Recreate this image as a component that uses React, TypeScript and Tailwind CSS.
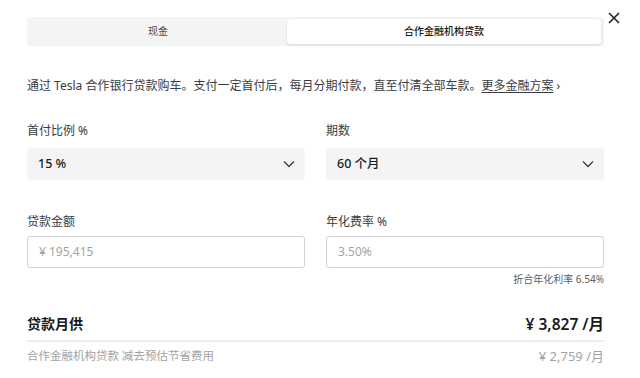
const ChevronDown = () => (
  <svg width="12" height="8" viewBox="0 0 12 8" fill="none" stroke="#393c41" strokeWidth="1.3">
    <path d="M1 1.5l5 5 5-5" />
  </svg>
);

const App = () => {
  return (
    <div
      className="relative w-[640px] h-[378px] overflow-hidden bg-white text-[#393c41]"
      style={{ fontFamily: '"Noto Sans", "Noto Sans CJK SC", sans-serif' }}
    >
      {/* Close */}
      <button className="absolute left-[608px] top-[12px] w-[12px] h-[12px]">
        <svg width="12" height="12" viewBox="0 0 12 12" stroke="#222" strokeWidth="1.6" fill="none">
          <path d="M1 1l10 10M11 1L1 11" />
        </svg>
      </button>

      <div className="pl-[27px] pr-[36px] pt-[17px]">
        {/* Tabs */}
        <div className="flex h-[29px] rounded-[3px] bg-[#f4f4f4] p-[2px] pr-[3px]">
          <div className="w-[258px] flex items-center justify-center text-[10px] text-[#4a4c50]">现金</div>
          <div className="flex-1 flex items-center justify-center rounded-[3px] bg-white text-[10px] font-medium text-[#171a20] shadow-[0_1px_3px_rgba(0,0,0,0.12)]">
            合作金融机构贷款
          </div>
        </div>

        {/* Description */}
        <p className="mt-[31px] text-[12px] leading-[18px] text-[#393c41]">
          通过 Tesla 合作银行贷款购车。支付一定首付后，每月分期付款，直至付清全部车款。
          <a href="#" className="underline underline-offset-2 decoration-[#393c41]">更多金融方案</a> ›
        </p>

        {/* Selects */}
        <div className="mt-[27px] grid grid-cols-2 gap-x-[21px]">
          <div>
            <div className="text-[12px] leading-[18px]">首付比例 %</div>
            <div className="mt-[8px] h-[32px] flex items-center justify-between rounded-[3px] bg-[#f4f4f4] pl-[11px] pr-[10px] text-[12.5px] font-medium text-[#171a20]">
              <span>15 %</span>
              <ChevronDown />
            </div>
          </div>
          <div>
            <div className="text-[12px] leading-[18px]">期数</div>
            <div className="mt-[8px] h-[32px] flex items-center justify-between rounded-[3px] bg-[#f4f4f4] pl-[11px] pr-[10px] text-[12.5px] font-medium text-[#171a20]">
              <span>60 个月</span>
              <ChevronDown />
            </div>
          </div>
        </div>

        {/* Inputs */}
        <div className="mt-[33px] grid grid-cols-2 gap-x-[21px]">
          <div>
            <div className="text-[12px] leading-[18px]">贷款金额</div>
            <div className="mt-[5px] h-[32px] flex items-center rounded-[3px] border border-[#d0d1d2] pl-[11px] text-[12px] text-[#a2a3a5]">
              ¥ 195,415
            </div>
          </div>
          <div>
            <div className="text-[12px] leading-[18px]">年化费率 %</div>
            <div className="mt-[5px] h-[32px] flex items-center rounded-[3px] border border-[#d0d1d2] pl-[11px] text-[12px] text-[#a2a3a5]">
              3.50%
            </div>
          </div>
        </div>
        <div className="mt-[4px] text-right text-[10px] leading-[14px] text-[#5c5e62]">折合年化利率 6.54%</div>

        {/* Monthly */}
        <div className="mt-[28px] flex items-center justify-between leading-[20px] font-semibold text-[#171a20]">
          <span className="text-[14px]">贷款月供</span>
          <span className="text-[15.5px]">¥ 3,827 /月</span>
        </div>
        <div className="mt-[6px] h-[2px] bg-[#eeeeee]" />
        <div className="mt-[6px] flex items-center justify-between text-[11.5px] leading-[16px] text-[#a2a3a5]">
          <span>合作金融机构贷款 减去预估节省费用</span>
          <span className="text-[13px]">¥ 2,759 /月</span>
        </div>
      </div>
    </div>
  );
};

export default App;
